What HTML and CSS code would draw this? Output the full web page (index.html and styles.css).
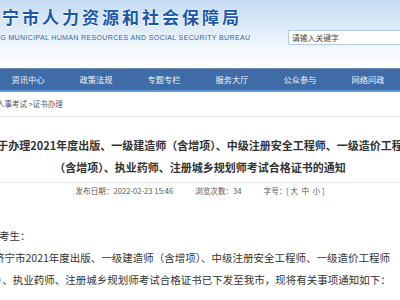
FILE: index.html
```html
<!DOCTYPE html>
<html lang="zh-CN">
<head>
    <meta charset="UTF-8">
    <meta name="viewport" content="width=device-width, initial-scale=1.0">
    <title>关于办理2021年度出版、一级建造师（含增项）等考试合格证书的通知</title>
    <link rel="stylesheet" href="styles.css">
</head>
<body>
    <div class="header">
        <div class="header-inner">
            <div class="logo">
                <div class="logo-cn">济宁市人力资源和社会保障局</div>
                <div class="logo-en">JINING MUNICIPAL HUMAN RESOURCES AND SOCIAL SECURITY BUREAU</div>
            </div>
            <div class="search">
                <input type="text" placeholder="请输入关键字">
            </div>
        </div>
    </div>

    <div class="nav">
        <a href="#">资讯中心</a>
        <a href="#">政策法规</a>
        <a href="#">专题专栏</a>
        <a href="#">服务大厅</a>
        <a href="#">公众参与</a>
        <a href="#">网络问政</a>
    </div>

    <div class="crumb">人事考试 &gt;证书办理</div>

    <div class="article-head">
        <h1>关于办理2021年度出版、一级建造师（含增项）、中级注册安全工程师、一级造价工程师（含增项）、执业药师、注册城乡规划师考试合格证书的通知</h1>
    </div>

    <div class="meta">
        <span>发布日期：2022-02-23 15:46</span>
        <span>浏览次数：34</span>
        <span>字号：[ 大&nbsp; 中&nbsp; 小 ]</span>
    </div>

    <div class="article-body">
        <div class="greet">各位考生：</div>
        <p>济宁市2021年度出版、一级建造师（含增项）、中级注册安全工程师、一级造价工程师（含增项）、执业药师、注册城乡规划师考试合格证书已下发至我市，现将有关事项通知如下：</p>
    </div>
</body>
</html>
```

FILE: styles.css
```css
body {
    margin: 0;
    overflow: hidden;
    background: #fff;
    font-family: "Noto Sans CJK SC", "Noto Sans", sans-serif;
    color: #333;
}

.header {
    height: 68px;
    background: linear-gradient(to bottom, #c5dbf2 0%, #dae9f7 35%, #f1f7fd 70%, #ffffff 100%);
}

.header-inner {
    display: flex;
    align-items: flex-start;
}

.logo {
    margin-left: -18px;
    padding-top: 6px;
    width: 256px;
    flex-shrink: 0;
}

.logo-cn {
    font-size: 17px;
    line-height: 22px;
    font-weight: bold;
    letter-spacing: 3px;
    color: #1b58ad;
    text-shadow: 0 0 2px #fff, 0 1px 1px #fff;
    white-space: nowrap;
}

.logo-en {
    margin-top: 5px;
    margin-left: -1px;
    font-family: "Liberation Sans", Arial, sans-serif;
    font-size: 7px;
    line-height: 9px;
    letter-spacing: 0.36px;
    color: #2a5ea5;
    text-shadow: 0 0 1px #fff;
    white-space: nowrap;
}

.search {
    margin-left: 50px;
    margin-top: 22px;
    flex-shrink: 0;
}

.search input {
    width: 130px;
    height: 15px;
    box-sizing: border-box;
    border: 1px solid #b3cde8;
    background: #fff;
    padding: 0 3px;
    font-family: "Noto Sans CJK SC", sans-serif;
    font-size: 7.8px;
    outline: none;
}

.search input::placeholder {
    color: #444;
}

.nav {
    display: flex;
    height: 24px;
    box-sizing: border-box;
    background: #3f6ba6;
    border-top: 1px solid #6f8fb9;
    border-bottom: 2px solid #5f9ade;
    margin-left: -6px;
}

.nav a {
    flex: 0 0 68px;
    text-align: center;
    color: #f2f6fb;
    text-decoration: none;
    font-size: 8.2px;
    line-height: 21px;
}

.crumb {
    height: 24px;
    line-height: 24px;
    margin-left: -3px;
    font-size: 7.5px;
    color: #555;
    border-bottom: 1px solid #e2e2e2;
}

.article-head {
    width: 440px;
    margin-left: -20px;
    padding: 17px 0 4px;
    border-bottom: 1px solid #e6e6e6;
}

.article-head h1 {
    margin: 0;
    font-size: 11px;
    line-height: 22px;
    font-weight: bold;
    text-align: center;
    color: #333;
}

.meta {
    display: flex;
    justify-content: center;
    gap: 22px;
    font-size: 7.6px;
    line-height: 16px;
    color: #555;
}

.article-body {
    width: 452px;
    margin-left: -45px;
    margin-top: 26px;
    font-size: 10.5px;
    line-height: 22px;
    color: #333;
}

.greet {
    padding-left: 23px;
}

.article-body p {
    margin: 0;
    text-indent: 39px;
}
```
